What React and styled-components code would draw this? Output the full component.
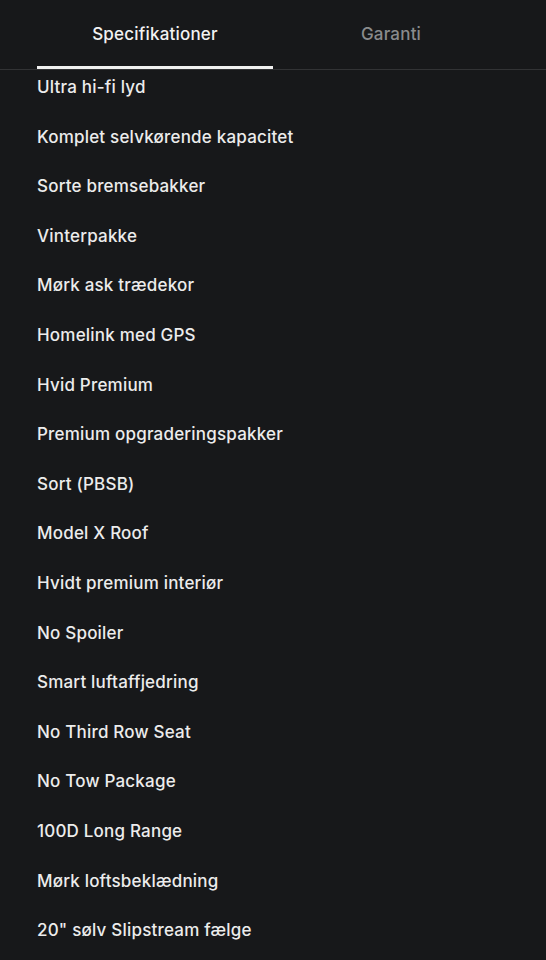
import React, { useState } from "react";
import styled, { createGlobalStyle } from "styled-components";

const GlobalStyle = createGlobalStyle`
  html, body {
    margin: 0;
    padding: 0;
    background: #17181a;
  }
  body {
    font-family: Inter, "Noto Sans", "Liberation Sans", sans-serif;
    -webkit-font-smoothing: antialiased;
  }
`;

const Page = styled.div`
  width: 546px;
  min-height: 960px;
  background: #17181a;
  color: #ececec;
  overflow: hidden;
`;

const TabBar = styled.div`
  display: flex;
  padding: 0 37px;
  border-bottom: 1px solid #323335;
`;

const Tab = styled.button`
  width: 236px;
  height: 69px;
  margin: 0;
  border: none;
  background: none;
  font-family: inherit;
  font-size: 17px;
  font-weight: 500;
  letter-spacing: 0.2px;
  color: ${(p) => (p.$active ? "#f2f2f2" : "#8a8b8d")};
  border-bottom: 3px solid ${(p) => (p.$active ? "#f0f0f0" : "transparent")};
  display: flex;
  align-items: flex-start;
  justify-content: center;
  padding: 24px 0 0;
  box-sizing: border-box;
  cursor: pointer;
`;

const List = styled.ul`
  list-style: none;
  margin: 0;
  padding: 5px 37px 0;
  display: flex;
  flex-direction: column;
  gap: 25.6px;
`;

const Item = styled.li`
  font-size: 17px;
  line-height: 24px;
  font-weight: 500;
  color: #ececec;
  letter-spacing: 0.2px;
`;

const specs = [
  "Ultra hi-fi lyd",
  "Komplet selvkørende kapacitet",
  "Sorte bremsebakker",
  "Vinterpakke",
  "Mørk ask trædekor",
  "Homelink med GPS",
  "Hvid Premium",
  "Premium opgraderingspakker",
  "Sort (PBSB)",
  "Model X Roof",
  "Hvidt premium interiør",
  "No Spoiler",
  "Smart luftaffjedring",
  "No Third Row Seat",
  "No Tow Package",
  "100D Long Range",
  "Mørk loftsbeklædning",
  '20" sølv Slipstream fælge',
];

export default function App() {
  const [tab, setTab] = useState(0);
  return (
    <Page>
      <GlobalStyle />
      <TabBar>
        <Tab $active={tab === 0} onClick={() => setTab(0)}>
          Specifikationer
        </Tab>
        <Tab $active={tab === 1} onClick={() => setTab(1)}>
          Garanti
        </Tab>
      </TabBar>
      <List>
        {specs.map((s) => (
          <Item key={s}>{s}</Item>
        ))}
      </List>
    </Page>
  );
}
